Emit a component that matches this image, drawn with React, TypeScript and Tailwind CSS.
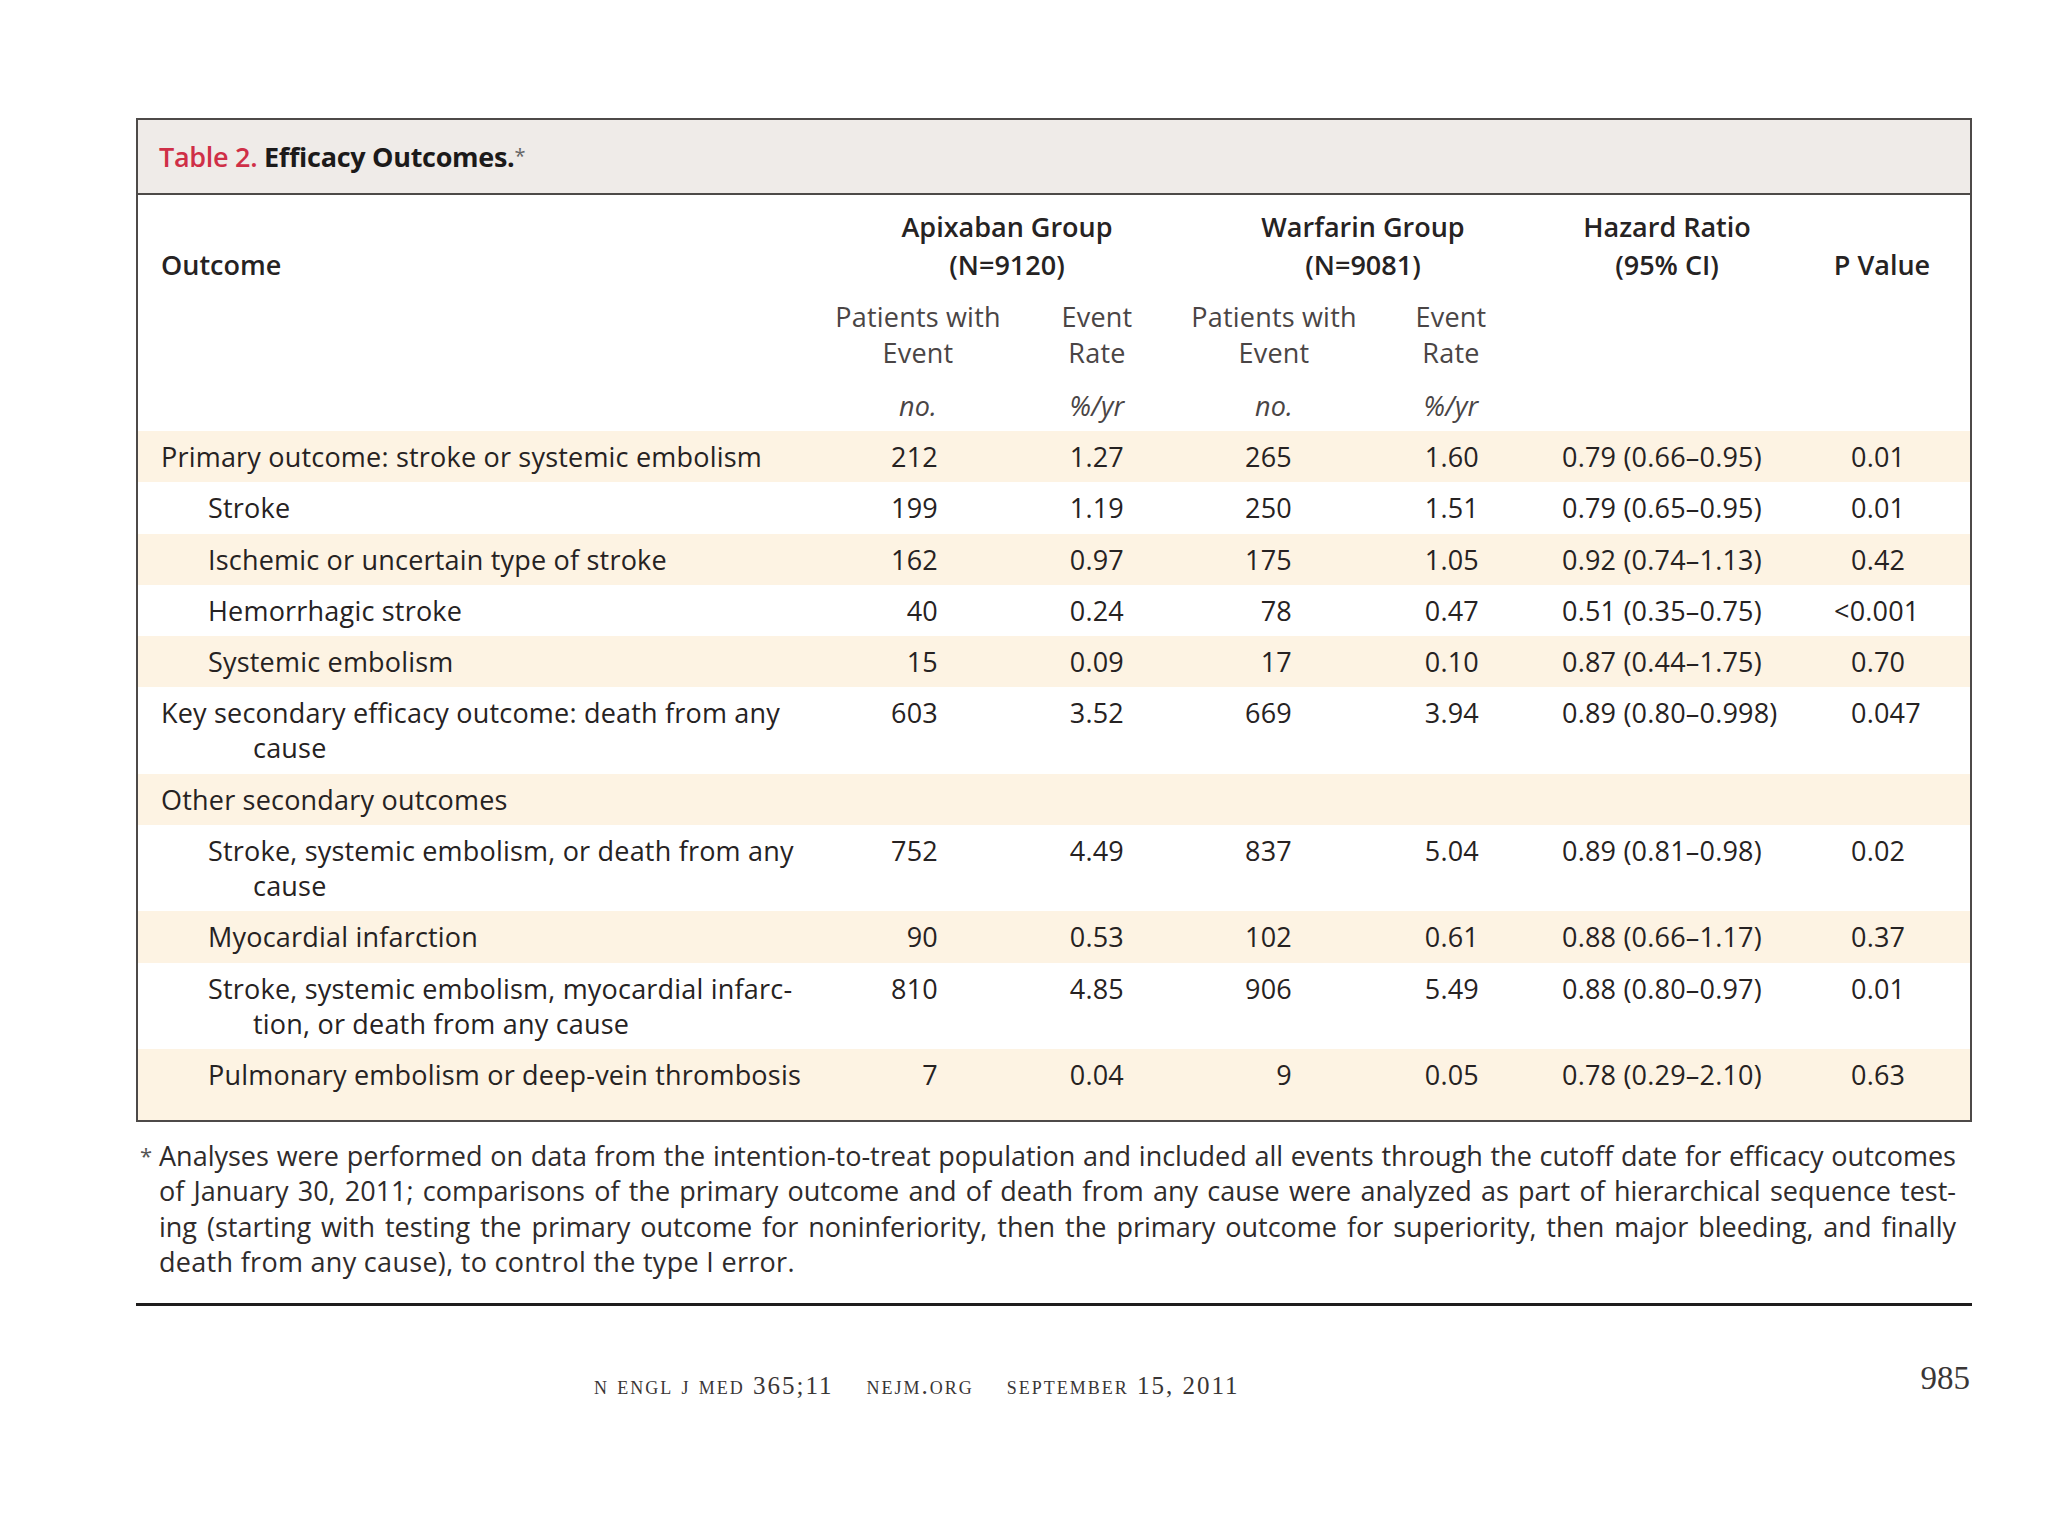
import React from 'react';

type Row = {
  lines: string[];
  level: 0 | 1;
  apixN?: string;
  apixR?: string;
  warfN?: string;
  warfR?: string;
  hr?: string;
  p?: string;
  shaded: boolean;
};

const rows: Row[] = [
  { lines: ['Primary outcome: stroke or systemic embolism'], level: 0, apixN: '212', apixR: '1.27', warfN: '265', warfR: '1.60', hr: '0.79 (0.66–0.95)', p: '0.01', shaded: true },
  { lines: ['Stroke'], level: 1, apixN: '199', apixR: '1.19', warfN: '250', warfR: '1.51', hr: '0.79 (0.65–0.95)', p: '0.01', shaded: false },
  { lines: ['Ischemic or uncertain type of stroke'], level: 1, apixN: '162', apixR: '0.97', warfN: '175', warfR: '1.05', hr: '0.92 (0.74–1.13)', p: '0.42', shaded: true },
  { lines: ['Hemorrhagic stroke'], level: 1, apixN: '40', apixR: '0.24', warfN: '78', warfR: '0.47', hr: '0.51 (0.35–0.75)', p: '<0.001', shaded: false },
  { lines: ['Systemic embolism'], level: 1, apixN: '15', apixR: '0.09', warfN: '17', warfR: '0.10', hr: '0.87 (0.44–1.75)', p: '0.70', shaded: true },
  { lines: ['Key secondary efficacy outcome: death from any', 'cause'], level: 0, apixN: '603', apixR: '3.52', warfN: '669', warfR: '3.94', hr: '0.89 (0.80–0.998)', p: '0.047', shaded: false },
  { lines: ['Other secondary outcomes'], level: 0, shaded: true },
  { lines: ['Stroke, systemic embolism, or death from any', 'cause'], level: 1, apixN: '752', apixR: '4.49', warfN: '837', warfR: '5.04', hr: '0.89 (0.81–0.98)', p: '0.02', shaded: false },
  { lines: ['Myocardial infarction'], level: 1, apixN: '90', apixR: '0.53', warfN: '102', warfR: '0.61', hr: '0.88 (0.66–1.17)', p: '0.37', shaded: true },
  { lines: ['Stroke, systemic embolism, myocardial infarc-', 'tion, or death from any cause'], level: 1, apixN: '810', apixR: '4.85', warfN: '906', warfR: '5.49', hr: '0.88 (0.80–0.97)', p: '0.01', shaded: false },
  { lines: ['Pulmonary embolism or deep-vein thrombosis'], level: 1, apixN: '7', apixR: '0.04', warfN: '9', warfR: '0.05', hr: '0.78 (0.29–2.10)', p: '0.63', shaded: true },
];

const COLS = 'grid grid-cols-[690px_180px_178px_176px_178px_254px_176px]';

const PValue: React.FC<{ value?: string }> = ({ value }) => {
  if (!value) return null;
  if (value.startsWith('<')) {
    return (
      <span>
        <span className="-ml-[17px]">&lt;</span>
        {value.slice(1)}
      </span>
    );
  }
  return <span>{value}</span>;
};

const BodyRow: React.FC<{ row: Row; last: boolean }> = ({ row, last }) => (
  <div
    className={`${COLS} pt-[8px] ${last ? 'pb-[28px]' : 'pb-[8.3px]'} leading-[35px] ${
      row.shaded ? 'bg-[#fdf3e3]' : 'bg-white'
    }`}
  >
    <div className={`whitespace-nowrap ${row.level === 0 ? 'pl-[23px]' : 'pl-[70px]'}`}>
      {row.lines.map((line, i) => (
        <div key={i} className={i > 0 ? (row.level === 0 ? 'pl-[92px]' : 'pl-[45px]') : ''}>
          {line}
        </div>
      ))}
    </div>
    <div className="text-right pr-[70px]">{row.apixN}</div>
    <div className="text-right pr-[62px]">{row.apixR}</div>
    <div className="text-right pr-[70px]">{row.warfN}</div>
    <div className="text-right pr-[61px]">{row.warfR}</div>
    <div className="pl-[22px] whitespace-nowrap">{row.hr}</div>
    <div className="pl-[57px]">
      <PValue value={row.p} />
    </div>
  </div>
);

const App: React.FC = () => {
  return (
    <div className="min-h-[1536px] w-[2048px] bg-white pt-[118px] pl-[136px] font-['Open_Sans','Noto_Sans',sans-serif] text-[#262222]">
      <div className="w-[1836px]">
        {/* table box */}
        <div className="border-2 border-[#4d4a48] text-[27px] tracking-[0.2px]">
          <div className="bg-[#efebe8] border-b-2 border-[#4d4a48] pl-[21px] pt-[19px] pb-[16px] leading-[35px] text-[27px] tracking-[-0.3px]">
            <span className="text-[#cf2f47] font-semibold">Table 2.</span>{' '}
            <span className="font-bold text-[#1c1a1a]">Efficacy Outcomes.</span>
            <span className="relative -top-[4px] text-[20px] text-[#666]">*</span>
          </div>

          {/* header */}
          <div className={`${COLS} pt-[13px] leading-[38px] font-semibold tracking-[0px] text-[#262323]`}>
            <div className="pl-[23px] self-end">Outcome</div>
            <div className="col-span-2 text-center">
              <div>Apixaban Group</div>
              <div>(N=9120)</div>
            </div>
            <div className="col-span-2 text-center">
              <div>Warfarin Group</div>
              <div>(N=9081)</div>
            </div>
            <div className="text-center">
              <div>Hazard Ratio</div>
              <div>(95% CI)</div>
            </div>
            <div className="text-center self-end">P Value</div>
          </div>
          <div className={`${COLS} pt-[15px] leading-[36px] text-[#4a4545]`}>
            <div />
            <div className="text-center">
              <div>Patients with</div>
              <div>Event</div>
            </div>
            <div className="text-center">
              <div>Event</div>
              <div>Rate</div>
            </div>
            <div className="text-center">
              <div>Patients with</div>
              <div>Event</div>
            </div>
            <div className="text-center">
              <div>Event</div>
              <div>Rate</div>
            </div>
            <div />
            <div />
          </div>
          <div className={`${COLS} pt-[17px] pb-[8px] leading-[35px] italic text-[#4a4545]`}>
            <div />
            <div className="text-center">no.</div>
            <div className="text-center">%/yr</div>
            <div className="text-center">no.</div>
            <div className="text-center">%/yr</div>
            <div />
            <div />
          </div>

          {/* body */}
          {rows.map((row, i) => (
            <BodyRow key={i} row={row} last={i === rows.length - 1} />
          ))}
        </div>

        {/* footnote */}
        <div className="mt-[16px] flex text-[27px] leading-[35.5px] text-[#2f2b2b]">
          <div className="w-[23px] pl-[4px] text-[22px] text-[#555]">*</div>
          <div className="w-[1797px]">
            <div className="whitespace-nowrap text-justify [text-align-last:justify] [word-spacing:-4px]">
              Analyses were performed on data from the intention-to-treat population and included all events through the cutoff date for efficacy outcomes
            </div>
            <div className="whitespace-nowrap text-justify [text-align-last:justify] [word-spacing:-2px]">
              of January 30, 2011; comparisons of the primary outcome and of death from any cause were analyzed as part of hierarchical sequence test-
            </div>
            <div className="whitespace-nowrap text-justify [text-align-last:justify] [word-spacing:-2px]">
              ing (starting with testing the primary outcome for noninferiority, then the primary outcome for superiority, then major bleeding, and finally
            </div>
            <div className="tracking-[0.3px]">death from any cause), to control the type I error.</div>
          </div>
        </div>

        <div className="mt-[23px] h-[3px] bg-[#1e1c1c]" />

        {/* page footer */}
        <div className="mt-[57px] flex items-end">
          <div className="pl-[458px] w-[1200px] font-['Liberation_Serif',serif] text-[25px] leading-[26px] [font-variant:small-caps] lowercase tracking-[2px] text-[#3a3636] whitespace-pre">
            N ENGL J MED 365;11    NEJM.ORG    SEPTEMBER 15, 2011
          </div>
          <div className="ml-auto pr-[2px] mb-[6px] font-['Liberation_Serif',serif] text-[33px] leading-[30px] text-[#3a3636]">
            985
          </div>
        </div>
      </div>
    </div>
  );
};

export default App;
